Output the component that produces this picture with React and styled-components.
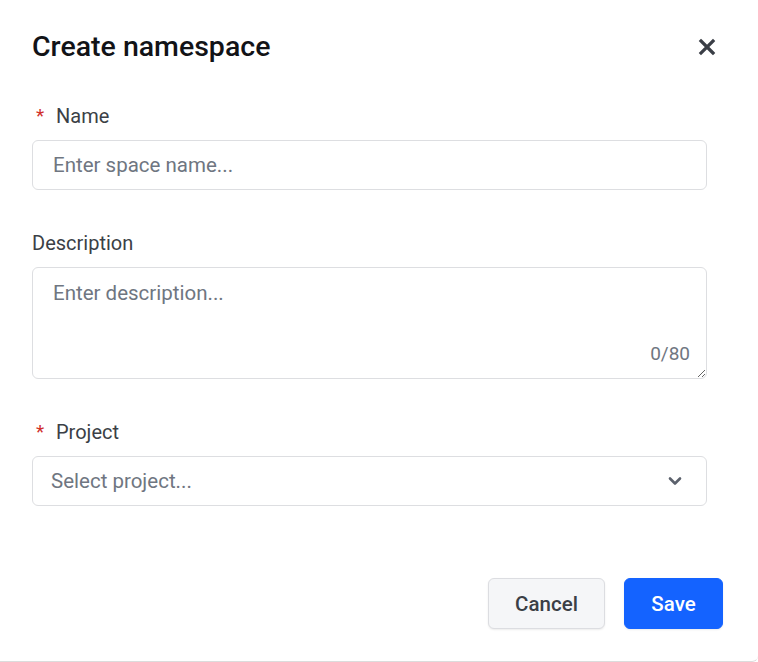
import React from 'react';
import styled, { createGlobalStyle } from 'styled-components';

const GlobalStyle = createGlobalStyle`
    * { box-sizing: border-box; }
    body {
        margin: 0;
        background: #ffffff;
        font-family: Roboto, "Noto Sans", "Liberation Sans", sans-serif;
    }
`;

// 모달 전체
const Modal = styled.div`
    width: 758px;
    height: 662px;
    display: flex;
    flex-direction: column;
    background: #ffffff;
    border-bottom: 1px solid #dcdcdc;
    border-bottom-right-radius: 6px;
`;

const Header = styled.div`
    display: flex;
    align-items: center;
    justify-content: space-between;
    padding: 31px 41px 0 32px;
`;

const Title = styled.h2`
    margin: 0;
    font-size: 28.5px;
    line-height: 32px;
    font-weight: 500;
    color: #121317;
`;

const CloseButton = styled.button`
    width: 20px;
    height: 20px;
    padding: 0;
    border: none;
    background: none;
    display: flex;
    align-items: center;
    justify-content: center;
    cursor: pointer;
`;

const Body = styled.div`
    display: flex;
    flex-direction: column;
    gap: 41px;
    padding: 41px 51px 0 32px;
`;

const Field = styled.div`
    display: flex;
    flex-direction: column;
    gap: 12px;
`;

const Label = styled.label`
    display: flex;
    align-items: center;
    font-size: 20px;
    line-height: 24px;
    color: #3b3f46;
`;

const Required = styled.span`
    color: #d0302b;
    font-size: 19px;
    width: 24px;
    padding-left: 4px;
`;

const Input = styled.input`
    width: 100%;
    height: 50px;
    padding: 0 20px;
    border: 1px solid #dddee1;
    border-radius: 6px;
    font-family: inherit;
    font-size: 20.5px;
    color: #1f2328;
    outline: none;
    &::placeholder { color: #6f7681; }
`;

const AreaWrap = styled.div`
    position: relative;
`;

const TextArea = styled.textarea`
    display: block;
    width: 100%;
    height: 112px;
    padding: 12px 20px;
    border: 1px solid #dddee1;
    border-radius: 6px;
    font-family: inherit;
    font-size: 20.5px;
    line-height: 26px;
    color: #1f2328;
    outline: none;
    resize: vertical;
    &::placeholder { color: #6f7681; }
`;

// 글자 수 카운터
const Counter = styled.span`
    position: absolute;
    right: 17px;
    bottom: 14px;
    font-size: 19px;
    color: #6f7681;
`;

const Select = styled.button`
    width: 100%;
    height: 50px;
    display: flex;
    align-items: center;
    justify-content: space-between;
    padding: 0 24px 0 18px;
    border: 1px solid #dddee1;
    border-radius: 6px;
    background: #ffffff;
    font-family: inherit;
    font-size: 20.5px;
    color: #6f7681;
    cursor: pointer;
`;

const Footer = styled.div`
    display: flex;
    justify-content: flex-end;
    gap: 19px;
    padding: 72px 35px 0 0;
`;

const Button = styled.button`
    height: 51px;
    width: ${p => (p.$primary ? '99px' : '117px')};
    border-radius: 6px;
    border: 1px solid ${p => (p.$primary ? '#1463ff' : '#dcdde1')};
    background: ${p => (p.$primary ? '#1463ff' : '#f5f6f8')};
    color: ${p => (p.$primary ? '#ffffff' : '#3b3f46')};
    font-family: inherit;
    font-size: 20.5px;
    font-weight: 500;
    box-shadow: 0 1px 2px rgba(0, 0, 0, 0.08);
    cursor: pointer;
`;

const CloseIcon = () => (
    <svg width="18" height="18" viewBox="0 0 18 18">
        <path d="M3 3 L15 15 M15 3 L3 15" stroke="#3a3e46" strokeWidth="3.2" strokeLinecap="square" />
    </svg>
);

const Chevron = () => (
    <svg width="14" height="10" viewBox="0 0 14 10">
        <path d="M2 2.5 L7 7.5 L12 2.5" fill="none" stroke="#5b616c" strokeWidth="2.6" strokeLinecap="round" strokeLinejoin="round" />
    </svg>
);

const App = () => {
    return (
        <>
            <GlobalStyle />
            <Modal>
                <Header>
                    <Title>Create namespace</Title>
                    <CloseButton aria-label="Close"><CloseIcon /></CloseButton>
                </Header>
                <Body>
                    <Field>
                        <Label><Required>*</Required>Name</Label>
                        <Input placeholder="Enter space name..." />
                    </Field>
                    <Field>
                        <Label>Description</Label>
                        <AreaWrap>
                            <TextArea placeholder="Enter description..." />
                            <Counter>0/80</Counter>
                        </AreaWrap>
                    </Field>
                    <Field>
                        <Label><Required>*</Required>Project</Label>
                        <Select type="button">
                            Select project...
                            <Chevron />
                        </Select>
                    </Field>
                </Body>
                <Footer>
                    <Button>Cancel</Button>
                    <Button $primary>Save</Button>
                </Footer>
            </Modal>
        </>
    );
};

export default App;
